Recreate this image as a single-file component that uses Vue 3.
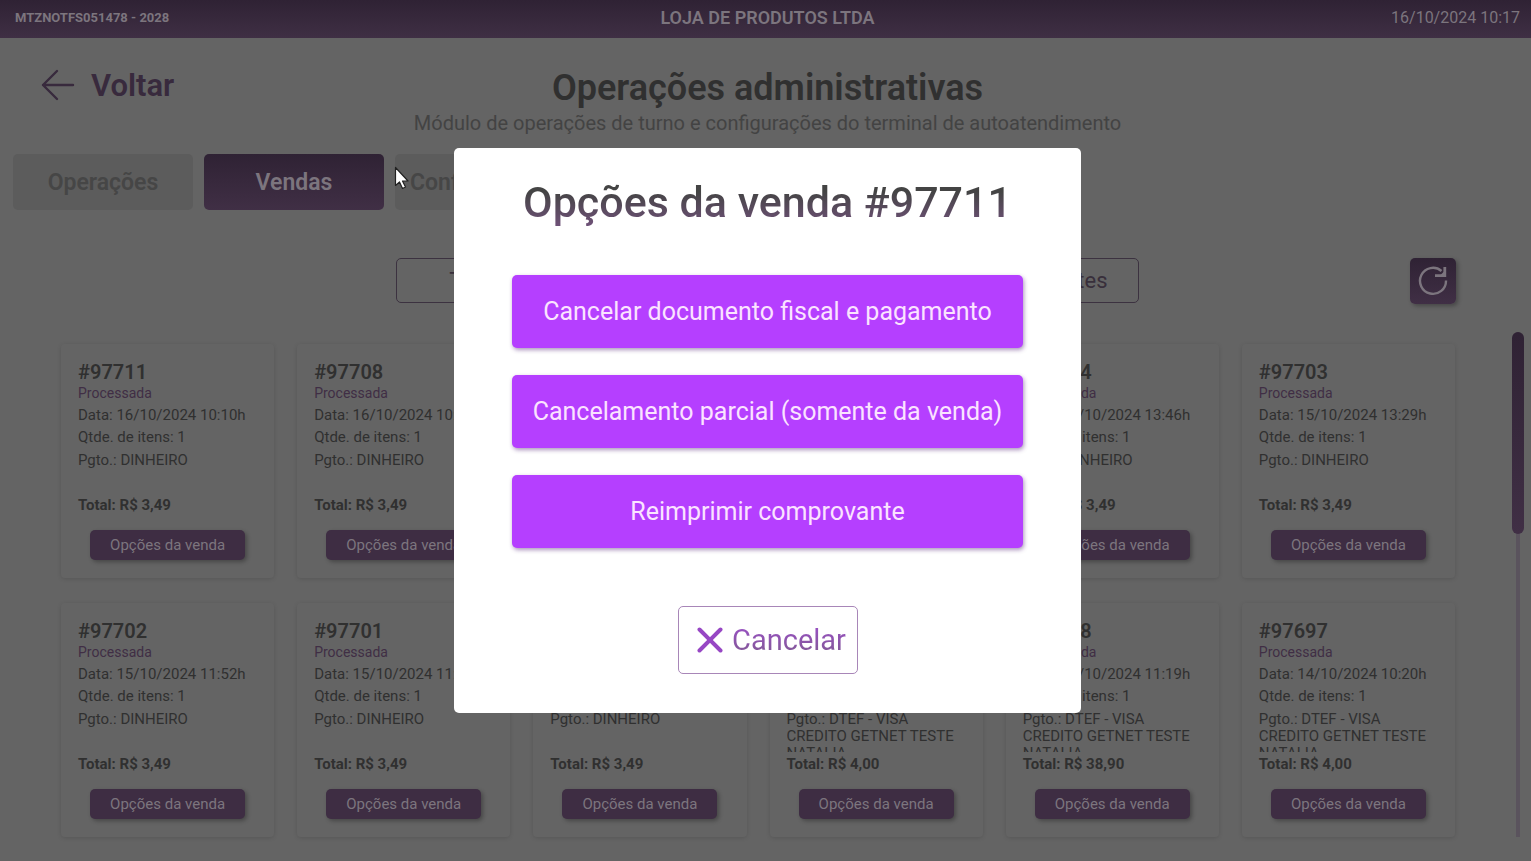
<script setup>
const tabs = [
  { label: 'Operações', active: false },
  { label: 'Vendas', active: true },
  { label: 'Configurações', active: false },
]

const filters = ['Todas', 'Pendentes']

const card = 'DTEF - VISA CREDITO GETNET TESTE NATALIA'
const sales = [
  { id: 97711, date: '16/10/2024 10:10h', pay: 'DINHEIRO', total: '3,49' },
  { id: 97708, date: '16/10/2024 10:02h', pay: 'DINHEIRO', total: '3,49' },
  { id: 97707, date: '15/10/2024 14:20h', pay: 'DINHEIRO', total: '3,49' },
  { id: 97705, date: '15/10/2024 13:58h', pay: 'DINHEIRO', total: '3,49' },
  { id: 97704, date: '15/10/2024 13:46h', pay: 'DINHEIRO', total: '3,49' },
  { id: 97703, date: '15/10/2024 13:29h', pay: 'DINHEIRO', total: '3,49' },
  { id: 97702, date: '15/10/2024 11:52h', pay: 'DINHEIRO', total: '3,49' },
  { id: 97701, date: '15/10/2024 11:40h', pay: 'DINHEIRO', total: '3,49' },
  { id: 97700, date: '15/10/2024 11:31h', pay: 'DINHEIRO', total: '3,49' },
  { id: 97699, date: '14/10/2024 11:25h', pay: card, total: '4,00' },
  { id: 97698, date: '14/10/2024 11:19h', pay: card, total: '38,90' },
  { id: 97697, date: '14/10/2024 10:20h', pay: card, total: '4,00' },
]

const actions = [
  'Cancelar documento fiscal e pagamento',
  'Cancelamento parcial (somente da venda)',
  'Reimprimir comprovante',
]
</script>

<template>
  <div class="app">
    <header class="bar">
      <strong class="terminal">MTZNOTFS051478 - 2028</strong>
      <strong class="store">LOJA DE PRODUTOS LTDA</strong>
      <time class="clock">16/10/2024 10:17</time>
    </header>

    <main>
      <div class="heading">
        <button class="back" type="button">
          <svg width="34" height="32" viewBox="0 0 34 32" fill="none" stroke="currentColor" stroke-width="2.4" stroke-linecap="round" stroke-linejoin="round" aria-hidden="true">
            <path d="M32 16H2M16 2L2 16l14 14" />
          </svg>
          Voltar
        </button>
        <div class="titles">
          <h1>Operações administrativas</h1>
          <p>Módulo de operações de turno e configurações do terminal de autoatendimento</p>
        </div>
      </div>

      <nav class="tabs">
        <button v-for="t in tabs" :key="t.label" type="button" class="tab" :class="{ active: t.active }">{{ t.label }}</button>
      </nav>

      <div class="toolbar">
        <div class="filters">
          <button v-for="f in filters" :key="f" type="button" class="filter">{{ f }}</button>
        </div>
        <button class="refresh" type="button" aria-label="Atualizar">
          <svg width="30" height="30" viewBox="0 0 30 30" fill="none" stroke="currentColor" stroke-width="2.4" aria-hidden="true">
            <path d="M28 14.500A13 13 0 1 1 23.500 5" />
            <path d="M26.800 1v8.600h-9.800" stroke-width="2.800" />
            <path d="M26.500 5v5h-5z" fill="currentColor" stroke="none" />
          </svg>
        </button>
      </div>

      <div class="list">
        <section class="cards">
          <article v-for="s in sales" :key="s.id" class="card">
            <h2>#{{ s.id }}</h2>
            <p class="status">Processada</p>
            <p class="date">Data: {{ s.date }}</p>
            <p class="qty">Qtde. de itens: 1</p>
            <p class="pay">Pgto.: {{ s.pay }}</p>
            <p class="total">Total: R$ {{ s.total }}</p>
            <button type="button" class="options">Opções da venda</button>
          </article>
        </section>
        <div class="track"><div class="thumb"></div></div>
      </div>
    </main>

    <div class="overlay">
      <section class="modal" role="dialog" aria-modal="true" aria-labelledby="modal-title">
        <h2 id="modal-title">Opções da venda #97711</h2>
        <div class="actions">
          <button v-for="a in actions" :key="a" type="button">{{ a }}</button>
        </div>
        <button type="button" class="cancel">
          <svg width="26" height="26" viewBox="0 0 26 26" fill="none" stroke="#9747c4" stroke-width="4" stroke-linecap="round" aria-hidden="true">
            <path d="M2.500 2.500l21 21M23.500 2.500l-21 21" />
          </svg>
          <span>Cancelar</span>
        </button>
      </section>
    </div>

    <svg class="cursor" width="16" height="24" viewBox="0 0 16 24" aria-hidden="true">
      <path d="M1.500 1.500v18l4-3.500 3 6.500 3-1.500-3-6h5.500z" fill="#fff" stroke="#222" stroke-width="1.200" stroke-linejoin="round" />
    </svg>
  </div>
</template>

<style>
body {
  background: #646464;
}
</style>

<style scoped>
.app {
  position: relative;
  min-height: 100vh;
  overflow: hidden;
  background: #646464;
  color: #303030;
  font-family: Roboto, "Liberation Sans", sans-serif;
}
* {
  box-sizing: border-box;
}
h1,
h2,
p {
  margin: 0;
}
button {
  padding: 0;
  border: 0;
  background: none;
  color: inherit;
  font-family: inherit;
}
.bar {
  display: grid;
  grid-template-columns: 1fr auto 1fr;
  align-items: center;
  height: 38px;
  padding: 0 11px 4px 15px;
  background: linear-gradient(#2f2234, #3f2f44);
  color: #7c757e;
}
.terminal {
  font-size: 13px;
}
.store {
  font-size: 18px;
  font-weight: 600;
}
.clock {
  font-size: 16px;
  text-align: right;
}
.heading {
  display: grid;
  grid-template-columns: 1fr auto 1fr;
  padding: 28px 0 0 4px;
}
.back {
  display: flex;
  align-items: center;
  justify-self: start;
  gap: 16px;
  height: 38px;
  margin-left: 37px;
  color: #382a3d;
  font-size: 31px;
  font-weight: 600;
}
.titles {
  text-align: center;
}
h1 {
  font-size: 36px;
  font-weight: 600;
  line-height: 44px;
}
.titles p {
  color: #434343;
  font-size: 20px;
  line-height: 26px;
}
.tabs {
  display: flex;
  gap: 11px;
  padding: 18px 13px 0;
}
.tab {
  width: 180px;
  height: 56px;
  border-radius: 5px;
  background: #5c5c5c;
  color: #464646;
  font-size: 23px;
  font-weight: 600;
}
.tab.active {
  background: linear-gradient(#2f2234, #402f45);
  color: #7c757e;
}
.toolbar {
  display: grid;
  grid-template-columns: 1fr 743px 1fr;
  align-items: start;
  padding: 48px 75px 0 79px;
}
.filters {
  display: flex;
  grid-column: 2;
  justify-content: space-between;
}
.filter {
  width: 167px;
  height: 45px;
  border: 1px solid #3c3240;
  border-radius: 5px;
  color: #382f3b;
  font-size: 22px;
}
.refresh {
  display: grid;
  place-items: center;
  justify-self: end;
  width: 46px;
  height: 46px;
  border-radius: 5px;
  background: linear-gradient(#2f2234, #402f45);
  box-shadow: 2px 2px 4px rgba(0, 0, 0, 0.3);
  color: #7c757e;
}
.list {
  display: flex;
  gap: 57px;
  padding: 28px 7px 18px 61px;
}
.cards {
  display: grid;
  flex: 1;
  grid-template-columns: repeat(6, minmax(0, 1fr));
  gap: 25px 23px;
  padding-top: 12px;
}
.card {
  display: flex;
  flex-direction: column;
  height: 234px;
  padding: 16px 17px 18px;
  border-radius: 4px;
  box-shadow: 0 1px 4px rgba(0, 0, 0, 0.13);
  font-size: 15px;
  line-height: 17px;
}
.card h2 {
  font-size: 20px;
  font-weight: 600;
  line-height: 24px;
}
.status {
  margin-top: 1px;
  color: #402e45;
  font-size: 14px;
}
.date,
.qty {
  margin-top: 5px;
}
.pay {
  height: 41px;
  margin-top: 6px;
  overflow: hidden;
}
.total {
  margin-top: 4px;
  font-weight: 700;
}
.options {
  align-self: center;
  width: 155px;
  height: 30px;
  margin-top: auto;
  border-radius: 5px;
  background: #3e2d43;
  box-shadow: 2px 2px 4px rgba(0, 0, 0, 0.3);
  color: #7c757e;
  font-size: 15px;
}
.track {
  width: 12px;
  background: linear-gradient(#5a535d, #5a535d) center / 4px 100% no-repeat;
}
.thumb {
  height: 202px;
  border-radius: 6px;
  background: linear-gradient(#2f2234, #402f45);
}
.overlay {
  position: fixed;
  inset: 0;
  display: grid;
  place-items: center;
  padding-left: 4px;
}
.modal {
  display: flex;
  flex-direction: column;
  align-items: center;
  width: 627px;
  max-width: 92%;
  padding: 28px 58px 39px;
  border-radius: 5px;
  background: #fff;
}
.modal h2 {
  background: linear-gradient(#444 30%, #71527b);
  background-clip: text;
  color: transparent;
  font-size: 43px;
  font-weight: 500;
  line-height: 52px;
}
.actions {
  display: grid;
  gap: 27px;
  width: 100%;
  margin-top: 47px;
}
.actions button {
  height: 73px;
  border-radius: 5px;
  background: #b53fff;
  box-shadow: 1px 2px 4px rgba(70, 20, 110, 0.45);
  color: #fbe3ff;
  font-size: 25px;
}
.cancel {
  display: flex;
  align-items: center;
  justify-content: center;
  gap: 9px;
  width: 180px;
  height: 68px;
  margin-top: 58px;
  padding-left: 8px;
  border: 1px solid #a886b8;
  border-radius: 5px;
  font-size: 29px;
}
.cancel span {
  background: linear-gradient(#9b4fc8, #7f5a91);
  background-clip: text;
  color: transparent;
}
.cursor {
  position: absolute;
  top: 166px;
  left: 394px;
}
</style>
